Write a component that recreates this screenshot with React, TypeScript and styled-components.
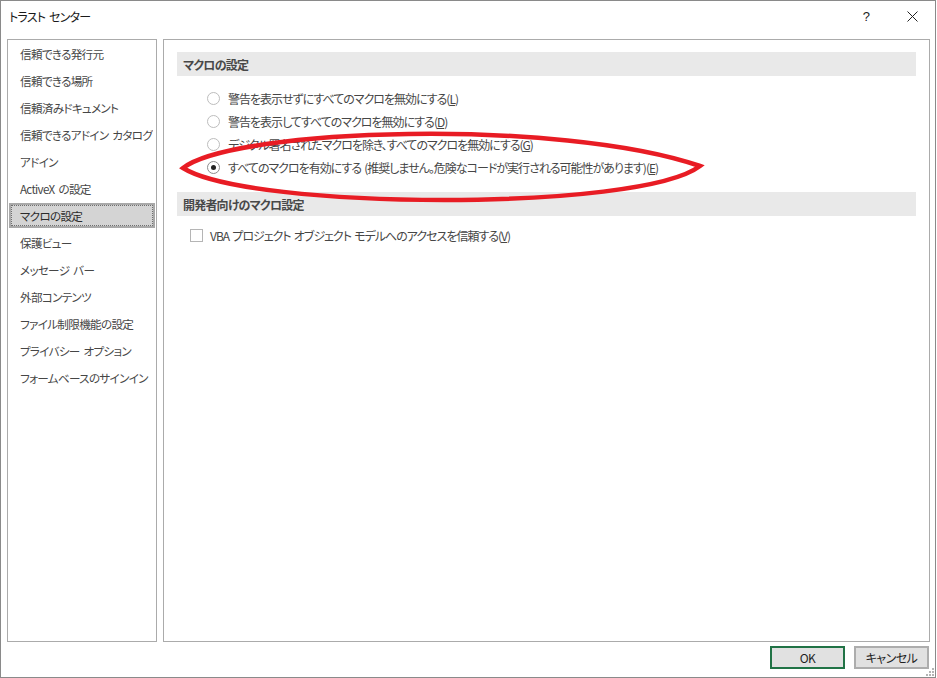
import React from 'react'
import styled, { createGlobalStyle } from 'styled-components'

const GlobalStyle = createGlobalStyle`
  html, body {
    margin: 0;
    padding: 0;
    background: #ffffff;
  }
  body {
    font-family: "Noto Sans CJK JP", "Noto Sans", sans-serif;
    font-feature-settings: "palt";
    -webkit-font-smoothing: antialiased;
  }
`

const Window = styled.div`
  position: relative;
  box-sizing: border-box;
  width: 936px;
  height: 678px;
  border: 1px solid #8a8a8a;
  background: #ffffff;
  display: flex;
  flex-direction: column;
`

const TitleBar = styled.div`
  height: 30px;
  display: flex;
  align-items: center;
  padding-left: 8px;
  font-size: 12px;
  letter-spacing: -0.8px;
  word-spacing: 2px;
  color: #1a1a1a;
`

const Title = styled.span`
  flex: 1;
`

const TitleButton = styled.div`
  width: 46px;
  height: 30px;
  display: flex;
  align-items: center;
  justify-content: center;
  font-family: "Liberation Sans", sans-serif;
  font-size: 13px;
  color: #222;
`

const Body = styled.div`
  display: flex;
  gap: 6px;
  padding: 8px 5px 0 6px;
`

const NavPanel = styled.div`
  box-sizing: border-box;
  width: 150px;
  height: 603px;
  border: 1px solid #ababab;
  display: flex;
  flex-direction: column;
`

const NavItem = styled.div`
  height: 27px;
  display: flex;
  align-items: center;
  padding: 0 1px;
`

const NavLabel = styled.div<{ $active?: boolean }>`
  flex: 1;
  box-sizing: border-box;
  height: 25px;
  display: flex;
  align-items: center;
  padding-left: 9px;
  white-space: pre;
  overflow: hidden;
  font-size: 11.6px;
  letter-spacing: -0.7px;
  word-spacing: 2px;
  color: ${p => (p.$active ? '#2b2b2b' : '#464646')};
  background: ${p => (p.$active ? '#d4d4d4' : 'transparent')};
  border: 2px solid ${p => (p.$active ? '#a9a9a9' : 'transparent')};
  outline: ${p => (p.$active ? '1px dotted #6f6f6f' : 'none')};
  outline-offset: -3px;
`

const ContentPanel = styled.div`
  box-sizing: border-box;
  width: 767px;
  height: 603px;
  border: 1px solid #ababab;
  padding: 12px 13px 0 13px;
  display: flex;
  flex-direction: column;
`

const SectionHeader = styled.div<{ $gap?: number }>`
  height: 24px;
  display: flex;
  align-items: center;
  padding-left: 6px;
  margin-top: ${p => p.$gap ?? 0}px;
  background: #e9e9e9;
  font-size: 12px;
  font-weight: 600;
  letter-spacing: -0.8px;
  color: #484848;
`

const OptionList = styled.div<{ $gap: number; $indent: number }>`
  display: flex;
  flex-direction: column;
  margin-top: ${p => p.$gap}px;
  padding-left: ${p => p.$indent}px;
`

const OptionRow = styled.div`
  height: 23px;
  display: flex;
  align-items: center;
  white-space: pre;
  font-size: 12px;
  letter-spacing: -1px;
  word-spacing: 1.5px;
  color: #464646;
`

const Radio = styled.span<{ $checked?: boolean }>`
  box-sizing: border-box;
  width: 13px;
  height: 13px;
  border-radius: 50%;
  border: 1px solid ${p => (p.$checked ? '#8d8d8d' : '#bdbdbd')};
  background: #fff;
  margin-right: 8px;
  display: flex;
  align-items: center;
  justify-content: center;
  &::after {
    content: '';
    display: ${p => (p.$checked ? 'block' : 'none')};
    width: 5px;
    height: 5px;
    border-radius: 50%;
    background: #222;
  }
`

const Checkbox = styled.span`
  box-sizing: border-box;
  width: 13px;
  height: 13px;
  border: 1px solid #b5b5b5;
  background: #fff;
  margin-right: 7px;
`

const Key = styled.u`
  text-underline-offset: 1px;
`

const Footer = styled.div`
  display: flex;
  justify-content: flex-end;
  gap: 9px;
  padding: 4px 6px 0 0;
`

const Button = styled.button<{ $primary?: boolean }>`
  box-sizing: border-box;
  width: 75px;
  height: 23px;
  padding: 0;
  font-family: "Noto Sans CJK JP", "Noto Sans", sans-serif;
  font-feature-settings: "palt";
  font-size: 12px;
  letter-spacing: -0.5px;
  color: #1f1f1f;
  background: #e1e1e1;
  border: 2px solid ${p => (p.$primary ? '#217346' : '#adadad')};
`

const Annotation = styled.svg`
  position: absolute;
  left: -1px;
  top: -1px;
  pointer-events: none;
`

const Grip = styled.svg`
  position: absolute;
  right: 1px;
  bottom: 1px;
`

const navItems = [
  '信頼できる発行元',
  '信頼できる場所',
  '信頼済みドキュメント',
  '信頼できるアドイン カタログ',
  'アドイン',
  'ActiveX の設定',
  'マクロの設定',
  '保護ビュー',
  'メッセージ バー',
  '外部コンテンツ',
  'ファイル制限機能の設定',
  'プライバシー オプション',
  'フォームベースのサインイン',
]

const macroOptions = [
  { text: '警告を表示せずにすべてのマクロを無効にする', key: 'L' },
  { text: '警告を表示してすべてのマクロを無効にする', key: 'D' },
  { text: 'デジタル署名されたマクロを除き、すべてのマクロを無効にする', key: 'G' },
  {
    text: 'すべてのマクロを有効にする (推奨しません。危険なコードが実行される可能性があります)',
    key: 'E',
    checked: true,
  },
]

export default function App() {
  return (
    <>
      <GlobalStyle />
      <Window>
        <TitleBar>
          <Title>トラスト センター</Title>
          <TitleButton>?</TitleButton>
          <TitleButton>
            <svg width="11" height="11" viewBox="0 0 11 11">
              <path d="M0.5 0.5 L10.5 10.5 M10.5 0.5 L0.5 10.5" stroke="#222" strokeWidth="1" fill="none" />
            </svg>
          </TitleButton>
        </TitleBar>

        <Body>
          <NavPanel>
            {navItems.map(item => (
              <NavItem key={item}>
                <NavLabel $active={item === 'マクロの設定'}>{item}</NavLabel>
              </NavItem>
            ))}
          </NavPanel>

          <ContentPanel>
            <SectionHeader>マクロの設定</SectionHeader>
            <OptionList $gap={11} $indent={30}>
              {macroOptions.map(opt => (
                <OptionRow key={opt.key}>
                  <Radio $checked={opt.checked} />
                  <span>
                    {opt.text}(<Key>{opt.key}</Key>)
                  </span>
                </OptionRow>
              ))}
            </OptionList>

            <SectionHeader $gap={13}>開発者向けのマクロ設定</SectionHeader>
            <OptionList $gap={8} $indent={13}>
              <OptionRow>
                <Checkbox />
                <span>
                  VBA プロジェクト オブジェクト モデルへのアクセスを信頼する(<Key>V</Key>)
                </span>
              </OptionRow>
            </OptionList>
          </ContentPanel>
        </Body>

        <Footer>
          <Button $primary>OK</Button>
          <Button>キャンセル</Button>
        </Footer>

        <Annotation width="937" height="678" viewBox="0 0 937 678">
          <path
            d="M183 168 C 235 128, 560 118, 700 166 C 640 212, 250 210, 183 168 Z"
            fill="none"
            stroke="#e81c24"
            strokeWidth="4.5"
            strokeLinejoin="miter"
          />
        </Annotation>

        <Grip width="8" height="8" viewBox="0 0 8 8">
          <g fill="#b4b4b4">
            <rect x="6" y="0" width="2" height="2" />
            <rect x="3" y="3" width="2" height="2" />
            <rect x="6" y="3" width="2" height="2" />
            <rect x="0" y="6" width="2" height="2" />
            <rect x="3" y="6" width="2" height="2" />
            <rect x="6" y="6" width="2" height="2" />
          </g>
        </Grip>
      </Window>
    </>
  )
}
